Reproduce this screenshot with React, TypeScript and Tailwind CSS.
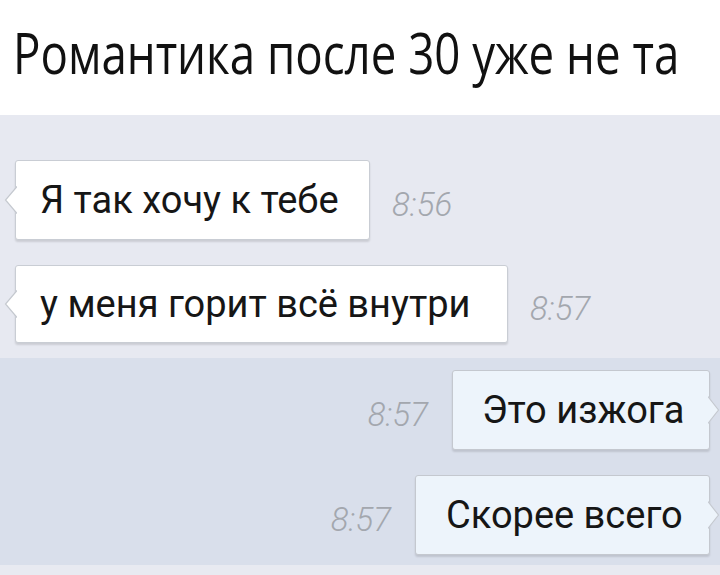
import React from "react";

const body = { fontFamily: "Roboto, 'Open Sans', 'Liberation Sans', sans-serif" };

function LeftTail() {
  return (
    <svg className="absolute left-[-12px] top-1/2 -translate-y-1/2" width="13" height="28" viewBox="0 0 13 28">
      <polygon points="13,0 1,14 13,28" fill="#ffffff" />
      <polyline points="13,0.5 1.5,14 13,27.5" fill="none" stroke="#c4c8cf" strokeWidth="1.2" />
    </svg>
  );
}

function RightTail() {
  return (
    <svg className="absolute right-[-11px] top-1/2 -translate-y-1/2" width="12" height="28" viewBox="0 0 12 28">
      <polygon points="0,0 11,14 0,28" fill="#edf4fb" />
      <polyline points="0,0.5 10.5,14 0,27.5" fill="none" stroke="#c4c8cf" strokeWidth="1.2" />
    </svg>
  );
}

function Time({ t }: { t: string }) {
  return (
    <span className="text-[33px] italic font-light text-[#a3a7ae] leading-none pt-2" style={body}>
      {t}
    </span>
  );
}

export default function App() {
  return (
    <div className="w-[720px] h-[575px] overflow-hidden bg-white flex flex-col">
      <div className="h-[115px] bg-white flex items-start pl-[13px] pt-[24px]">
        <h1
          className="text-[56px] leading-none text-[#111] whitespace-nowrap origin-left scale-x-[0.815]"
          style={{ fontFamily: "'Open Sans', 'Liberation Sans', sans-serif" }}
        >
          Романтика после 30 уже не та
        </h1>
      </div>
      <div className="h-[243px] bg-[#e7e9f1] flex flex-col gap-[25px] pt-[45px]">
        <div className="flex items-center gap-[22px] pl-[15px]">
          <div className="relative w-[355px] h-[80px] bg-white border border-[#c9cdd4] rounded-[3px] shadow-[0_2px_2px_rgba(0,0,0,0.12)] flex items-center pl-[24px]">
            <LeftTail />
            <span className="text-[38px] text-[#161616] whitespace-nowrap" style={body}>Я так хочу к тебе</span>
          </div>
          <Time t="8:56" />
        </div>
        <div className="flex items-center gap-[22px] pl-[15px]">
          <div className="relative w-[493px] h-[78px] bg-white border border-[#c9cdd4] rounded-[3px] shadow-[0_2px_2px_rgba(0,0,0,0.12)] flex items-center pl-[24px]">
            <LeftTail />
            <span className="text-[38px] text-[#161616] whitespace-nowrap" style={body}>у меня горит всё внутри</span>
          </div>
          <Time t="8:57" />
        </div>
      </div>
      <div className="h-[207px] bg-[#d9dfeb] flex flex-col gap-[25px] pt-[12px]">
        <div className="flex items-center justify-end gap-[24px] pr-[10px]">
          <Time t="8:57" />
          <div className="relative w-[258px] h-[80px] bg-[#edf4fb] border border-[#c4c8cf] rounded-[3px] shadow-[0_2px_2px_rgba(0,0,0,0.12)] flex items-center pl-[29px]">
            <RightTail />
            <span className="text-[38px] text-[#161616] whitespace-nowrap" style={body}>Это изжога</span>
          </div>
        </div>
        <div className="flex items-center justify-end gap-[24px] pr-[10px]">
          <Time t="8:57" />
          <div className="relative w-[295px] h-[80px] bg-[#edf4fb] border border-[#c4c8cf] rounded-[3px] shadow-[0_2px_2px_rgba(0,0,0,0.12)] flex items-center pl-[30px]">
            <RightTail />
            <span className="text-[38px] text-[#161616] whitespace-nowrap" style={body}>Скорее всего</span>
          </div>
        </div>
      </div>
      <div className="flex-1 bg-[#e8eaf1]" />
    </div>
  );
}
